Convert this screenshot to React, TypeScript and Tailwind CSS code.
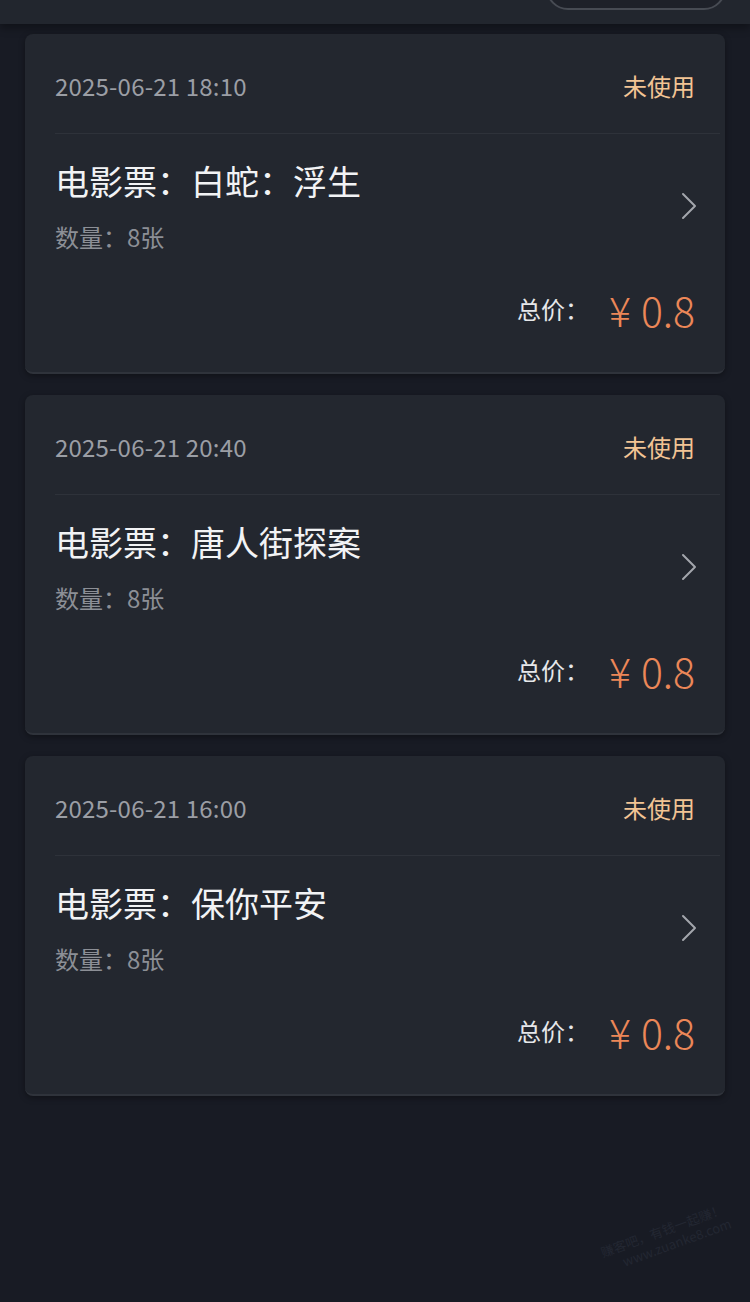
import { ChevronRight } from "lucide-react";

type Order = {
  time: string;
  title: string;
  count: number;
  price: string;
};

const orders: Order[] = [
  { time: "2025-06-21 18:10", title: "电影票：白蛇：浮生", count: 8, price: "0.8" },
  { time: "2025-06-21 20:40", title: "电影票：唐人街探案", count: 8, price: "0.8" },
  { time: "2025-06-21 16:00", title: "电影票：保你平安", count: 8, price: "0.8" },
];

const font = "font-['Noto_Sans_CJK_SC','Noto_Sans',sans-serif]";

function OrderCard({ order }: { order: Order }) {
  return (
    <div className="h-[340px] rounded-[8px] bg-[#23272f] border-b-2 border-[#2f333b] shadow-[0_2px_6px_rgba(0,0,0,0.35)] flex flex-col">
      <div className="h-[99px] pl-[30px] pr-[30px] pt-[35px] flex justify-between">
        <p className="text-[24px] leading-[34px] text-[#9b9ea5] tracking-[0.2px]">{order.time}</p>
        <p className="text-[24px] leading-[34px] text-[#f2c494]">未使用</p>
      </div>
      <div className="ml-[30px] mr-[5px] h-px bg-[#2e323a]" />
      <div className="pl-[30px] pr-[12px] pt-[26px] flex items-center justify-between">
        <div className="flex flex-col">
          <p className="text-[34px] leading-[42px] text-[#f2f3f5]">{order.title}</p>
          <p className="mt-[20px] text-[24px] leading-[30px] text-[#8c8f96]">
            数量：{order.count}张
          </p>
        </div>
        <ChevronRight className="w-[48px] h-[48px] text-[#a3a6ac]" strokeWidth={1} />
      </div>
      <div className="mt-[33px] pr-[30px] flex justify-end items-center">
        <span className="text-[24px] leading-[48px] text-[#e6e7ea] mr-[20px]">总价：</span>
        <span className="text-[41px] leading-[48px] text-[#ec8758] font-light">
          <span className="mr-[10px]">¥</span>
          {order.price}
        </span>
      </div>
    </div>
  );
}

export default function App() {
  return (
    <div className={`${font} relative min-h-[1302px] w-[750px] bg-[#181b24] overflow-hidden`}>
      <div className="h-[24px] bg-[#22262e] flex justify-end pr-[24px] overflow-hidden shadow-[0_4px_8px_rgba(0,0,0,0.35)]">
        <div className="w-[180px] h-[44px] -mt-[34px] rounded-full border-2 border-[#474b53] bg-[#1e2129]" />
      </div>
      <div className="px-[25px] pt-[10px] flex flex-col gap-[21px]">
        {orders.map((order, index) => (
          <OrderCard key={index} order={order} />
        ))}
      </div>
      <p className="absolute left-[600px] top-[1222px] -rotate-[20deg] text-[13px] leading-[16px] text-[#232732] whitespace-pre">
        {"赚客吧，有钱一起赚！\n      www.zuanke8.com"}
      </p>
    </div>
  );
}
